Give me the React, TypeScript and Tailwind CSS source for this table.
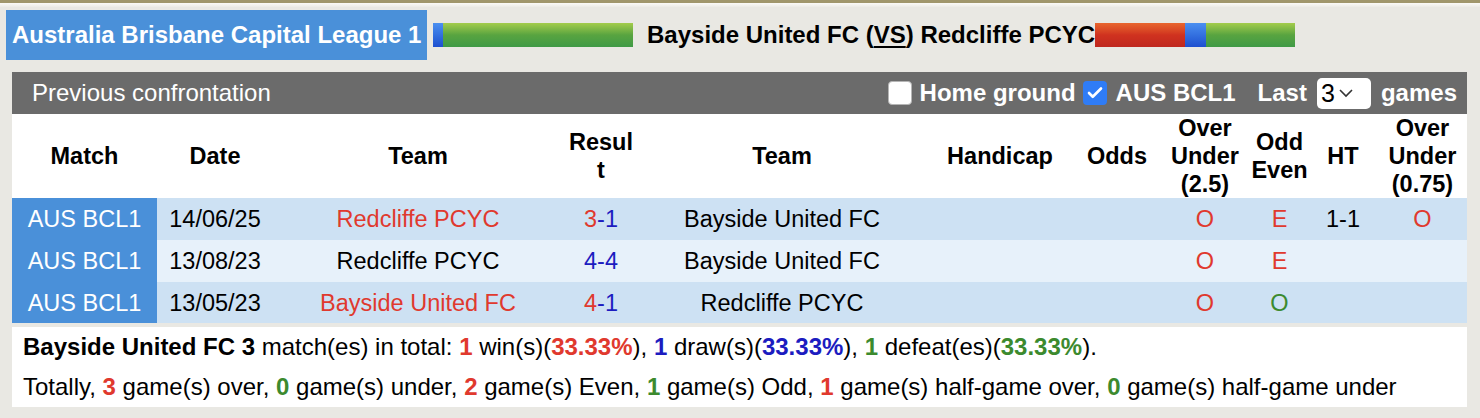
import { Check } from "lucide-react";

const RED = "text-[#e0392e]";
const BLUE = "text-[#1c1cc0]";
const GREEN = "text-[#3c8a2e]";

type Row = {
  date: string;
  home: string;
  homeRed: boolean;
  s1: string;
  s1Red: boolean;
  s2: string;
  away: string;
  ou: string;
  oe: string;
  oeGreen: boolean;
  ht: string;
  ou2: string;
};

const rows: Row[] = [
  { date: "14/06/25", home: "Redcliffe PCYC", homeRed: true, s1: "3", s1Red: true, s2: "1", away: "Bayside United FC", ou: "O", oe: "E", oeGreen: false, ht: "1-1", ou2: "O" },
  { date: "13/08/23", home: "Redcliffe PCYC", homeRed: false, s1: "4", s1Red: false, s2: "4", away: "Bayside United FC", ou: "O", oe: "E", oeGreen: false, ht: "", ou2: "" },
  { date: "13/05/23", home: "Bayside United FC", homeRed: true, s1: "4", s1Red: true, s2: "1", away: "Redcliffe PCYC", ou: "O", oe: "O", oeGreen: true, ht: "", ou2: "" },
];

const cols = [145, 116, 290, 76, 286, 150, 84, 92, 57, 70, 89];

export default function App() {
  return (
    <div className="w-[1480px] h-[418px] overflow-hidden bg-[#e9e8e3] font-['Liberation_Sans',Arial,sans-serif] text-black">
      <div className="h-[3px] bg-[#a0966c]" />
      <div className="h-[4px] bg-gradient-to-b from-[#fbfaf7] to-[#ecebe6]" />

      {/* Title bar */}
      <div className="flex items-center h-[50px] mt-[3px]">
        <div className="ml-[6px] w-[421px] h-[50px] bg-[#4a90d9] flex items-center pl-[6px]">
          <span className="text-white font-bold text-[24px] leading-none whitespace-nowrap">Australia Brisbane Capital League 1</span>
        </div>
        <div className="ml-[6px] flex h-[24px] w-[200px]">
          <div className="w-[10px] bg-gradient-to-b from-[#4b8ff0] to-[#1f4fcf]" />
          <div className="flex-1 bg-gradient-to-b from-[#a3cc4b] via-[#58a440] to-[#3f9a46]" />
        </div>
        <span className="ml-[14px] font-bold text-[24px] leading-none whitespace-nowrap">
          Bayside United FC (<span className="underline underline-offset-[3px]">VS</span>) Redcliffe PCYC
        </span>
        <div className="flex h-[24px] w-[200px]">
          <div className="w-[90px] bg-gradient-to-b from-[#e8652e] via-[#d0321f] to-[#bf281f]" />
          <div className="w-[21px] bg-gradient-to-b from-[#4b8ff0] to-[#1f4fcf]" />
          <div className="flex-1 bg-gradient-to-b from-[#a3cc4b] via-[#58a440] to-[#3f9a46]" />
        </div>
      </div>

      {/* Panel */}
      <div className="ml-[12px] mt-[12px] w-[1455px]">
        <div className="h-[42px] bg-[#6b6b6b] flex items-center justify-between pl-[20px] pr-[10px] text-white">
          <span className="text-[24px] leading-none">Previous confrontation</span>
          <div className="flex items-center text-[24px] font-bold leading-none">
            <span className="w-[24px] h-[24px] rounded-[4px] bg-white border border-[#b5b5b5]" />
            <span className="ml-[8px]">Home ground</span>
            <span className="ml-[7px] w-[24px] h-[24px] rounded-[4px] bg-[#2f7cf6] flex items-center justify-center">
              <Check size={18} strokeWidth={3.5} className="text-white" />
            </span>
            <span className="ml-[9px]">AUS BCL1</span>
            <span className="ml-[22px]">Last</span>
            <span className="ml-[10px] w-[54px] h-[31px] rounded-[5px] bg-white text-black font-normal text-[25px] flex items-center pl-[4px]">
              3
              <svg width="16" height="10" viewBox="0 0 16 10" className="ml-[3px]">
                <path d="M2 2 L8 8 L14 2" fill="none" stroke="#333" strokeWidth="1.6" />
              </svg>
            </span>
            <span className="ml-[10px]">games</span>
          </div>
        </div>

        <table className="w-full table-fixed border-collapse text-center">
          <colgroup>
            {cols.map((w, i) => (
              <col key={i} style={{ width: w }} />
            ))}
          </colgroup>
          <thead>
            <tr className="h-[83px] bg-white font-bold text-[23.5px] leading-[28px]">
              <th className="p-0">Match</th>
              <th className="p-0">Date</th>
              <th className="p-0">Team</th>
              <th className="p-0">Resul<br />t</th>
              <th className="p-0">Team</th>
              <th className="p-0">Handicap</th>
              <th className="p-0">Odds</th>
              <th className="p-0">Over<br />Under<br />(2.5)</th>
              <th className="p-0">Odd<br />Even</th>
              <th className="p-0">HT</th>
              <th className="p-0">Over<br />Under<br />(0.75)</th>
            </tr>
          </thead>
          <tbody className="text-[23.5px] leading-none">
            {rows.map((r, i) => (
              <tr key={r.date} className={`${i === 2 ? "h-[41px]" : "h-[42px]"} ${i === 1 ? "bg-[#e7f1fa]" : "bg-[#cde1f3]"}`}>
                <td className="p-0 pt-[2px] bg-[#4a90d9] text-white">AUS BCL1</td>
                <td className="p-0 pt-[2px]">{r.date}</td>
                <td className={`p-0 pt-[2px] ${r.homeRed ? RED : ""}`}>{r.home}</td>
                <td className="p-0 pt-[2px]">
                  <span className={r.s1Red ? RED : BLUE}>{r.s1}</span>
                  <span className={BLUE}>-{r.s2}</span>
                </td>
                <td className="p-0 pt-[2px]">{r.away}</td>
                <td className="p-0" />
                <td className="p-0" />
                <td className={`p-0 pt-[2px] ${RED}`}>{r.ou}</td>
                <td className={`p-0 pt-[2px] ${r.oeGreen ? GREEN : RED}`}>{r.oe}</td>
                <td className="p-0 pt-[2px]">{r.ht}</td>
                <td className={`p-0 pt-[2px] ${RED}`}>{r.ou2}</td>
              </tr>
            ))}
          </tbody>
        </table>

        {/* Summary */}
        <div className="mt-[4px] bg-white pl-[11px] text-[24px] leading-[40px] whitespace-nowrap">
          <div>
            <b>Bayside United FC 3</b> match(es) in total: <b className={RED}>1</b> win(s)(<b className={RED}>33.33%</b>), <b className={BLUE}>1</b> draw(s)(<b className={BLUE}>33.33%</b>), <b className={GREEN}>1</b> defeat(es)(<b className={GREEN}>33.33%</b>).
          </div>
          <div>
            Totally, <b className={RED}>3</b> game(s) over, <b className={GREEN}>0</b> game(s) under, <b className={RED}>2</b> game(s) Even, <b className={GREEN}>1</b> game(s) Odd, <b className={RED}>1</b> game(s) half-game over, <b className={GREEN}>0</b> game(s) half-game under
          </div>
        </div>
      </div>
    </div>
  );
}
